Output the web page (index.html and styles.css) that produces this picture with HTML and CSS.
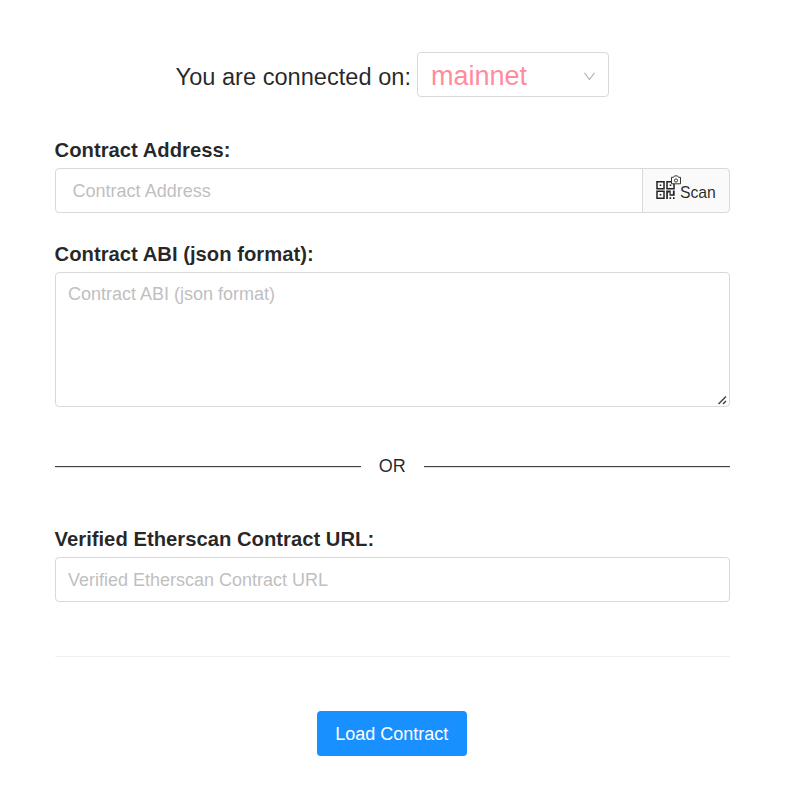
FILE: index.html
```html
<!DOCTYPE html>
<html lang="en">
<head>
<meta charset="utf-8">
<title>Load Contract</title>
<link rel="stylesheet" href="styles.css">
</head>
<body>
<main class="page">
  <div class="network">
    <span class="network-label">You are connected on:</span>
    <div class="select">
      <span class="select-value">mainnet</span>
      <svg class="select-arrow" width="13" height="13" viewBox="64 64 896 896" fill="currentColor"><path d="M884 256h-75c-5.100 0-9.900 2.500-12.900 6.600L512 654.200 227.900 262.600c-3-4.100-7.800-6.600-12.900-6.600h-75c-6.500 0-10.300 7.400-6.500 12.700l352.600 486.100c12.800 17.600 39 17.600 51.700 0l352.600-486.100c3.900-5.300.1-12.700-6.400-12.700z"/></svg>
    </div>
  </div>

  <div class="field">
    <label class="label" for="address">Contract Address:</label>
    <div class="group">
      <input class="control address" id="address" type="text" placeholder="Contract Address">
      <div class="addon">
        <svg class="scan-icon" width="25" height="25" viewBox="0 0 25 25" fill="none" stroke="#222">
          <g stroke-width="1.500">
            <rect x="1" y="6.750" width="7" height="7"/>
            <rect x="11" y="6.750" width="7" height="7"/>
            <rect x="1" y="16.250" width="7" height="7"/>
          </g>
          <path d="M3.700 9.500h1.600v1.600H3.700zM13.700 9.500h1.600v1.600h-1.600zM3.700 19h1.600v1.600H3.700zM10.200 15.500h4.500v3.800h2.200v-3.800h1.800v5.300h-5.200v-3.300h-1.600v6.500h-1.700zM13.500 22.300h1.600v1.600h-1.600zM17 22.300h1.600v1.600H17z" fill="#222" stroke="none"/>
          <path d="M15.500 2.300h2l1-1.400h3l1 1.400h2v6.500h-9z" fill="#fafafa" stroke-width=".9"/>
          <circle cx="20" cy="5.500" r="1.600" stroke-width=".9"/>
        </svg>
        <span class="scan-text">Scan</span>
      </div>
    </div>
  </div>

  <div class="field">
    <label class="label" for="abi">Contract ABI (json format):</label>
    <div class="textarea-wrap">
      <textarea class="control abi" id="abi" placeholder="Contract ABI (json format)"></textarea>
      <svg class="grip" width="10" height="10" viewBox="0 0 10 10" stroke="#444" stroke-width="1.500"><path d="M1.500 9L9 1.500M6 9L9 6"/></svg>
    </div>
  </div>

  <div class="divider">OR</div>

  <div class="field">
    <label class="label" for="url">Verified Etherscan Contract URL:</label>
    <input class="control" id="url" type="text" placeholder="Verified Etherscan Contract URL">
  </div>

  <hr class="rule">
  <button class="button" type="button">Load Contract</button>
</main>
</body>
</html>
```
FILE: styles.css
```css
* { box-sizing: border-box; }
body {
  margin: 0;
  background: #fff;
  color: rgba(0, 0, 0, .85);
  font-family: "Liberation Sans", Arial, sans-serif;
  font-size: 18px;
}
.page {
  display: flex;
  flex-direction: column;
  width: 675.4px;
  margin-left: 54.6px;
  padding-top: 52px;
}
.network {
  display: flex;
  justify-content: center;
  gap: 6px;
  height: 45px;
  margin-bottom: 36px;
}
.network-label { font-size: 23.625px; line-height: 50px; }
.select {
  display: flex;
  align-items: center;
  justify-content: space-between;
  width: 192px;
  padding: 3px 12px 0 13px;
  border: 1px solid #d9d9d9;
  border-radius: 4px;
}
.select-value { color: #ff8b9e; font-size: 27px; line-height: 43px; }
.select-arrow { color: rgba(0, 0, 0, .3); }
.field { display: flex; flex-direction: column; margin-bottom: 24px; }
.label { height: 35px; font-size: 20.25px; font-weight: 700; line-height: 35px; }
.control {
  display: block;
  width: 100%;
  height: 45px;
  margin: 0;
  padding: 2px 12.4px 0;
  border: 1px solid #d9d9d9;
  border-radius: 4px;
  background: #fff;
  color: inherit;
  font: inherit;
  outline: none;
}
.control::placeholder { color: #bfbfbf; }
.group { display: flex; }
.address { flex: 1; width: auto; min-width: 0; padding-left: 17px; border-radius: 4px 0 0 4px; }
.addon {
  display: flex;
  width: 88px;
  height: 45px;
  margin-left: -1px;
  padding: 6px 0 0 13px;
  border: 1px solid #d9d9d9;
  border-radius: 0 4px 4px 0;
  background: #fafafa;
}
.scan-icon { flex: none; margin-right: -1px; }
.scan-text { font-size: 15.750px; line-height: 36px; }
.textarea-wrap { position: relative; }
.abi { height: 135px; padding: 7px 12.4px; line-height: 28.300px; resize: none; }
.grip { position: absolute; right: 3px; bottom: 2px; }
.divider {
  display: flex;
  align-items: center;
  gap: 18px;
  height: 28px;
  margin: 21px 0 42px;
}
.divider::before, .divider::after { content: ""; flex: 1; height: 1px; background: #404040; box-shadow: 0 1px rgba(0, 0, 0, .12); }
.rule { width: 100%; height: 1px; margin: 30px 0 54px; border: 0; background: #f0f0f0; }
.button {
  align-self: center;
  width: 150px;
  height: 45px;
  margin-left: -1px;
  padding: 2px 0 0;
  border: 0;
  border-radius: 4px;
  background: #1890ff;
  box-shadow: 0 2px 0 rgba(0, 0, 0, .045);
  color: #fff;
  font: inherit;
}
```
